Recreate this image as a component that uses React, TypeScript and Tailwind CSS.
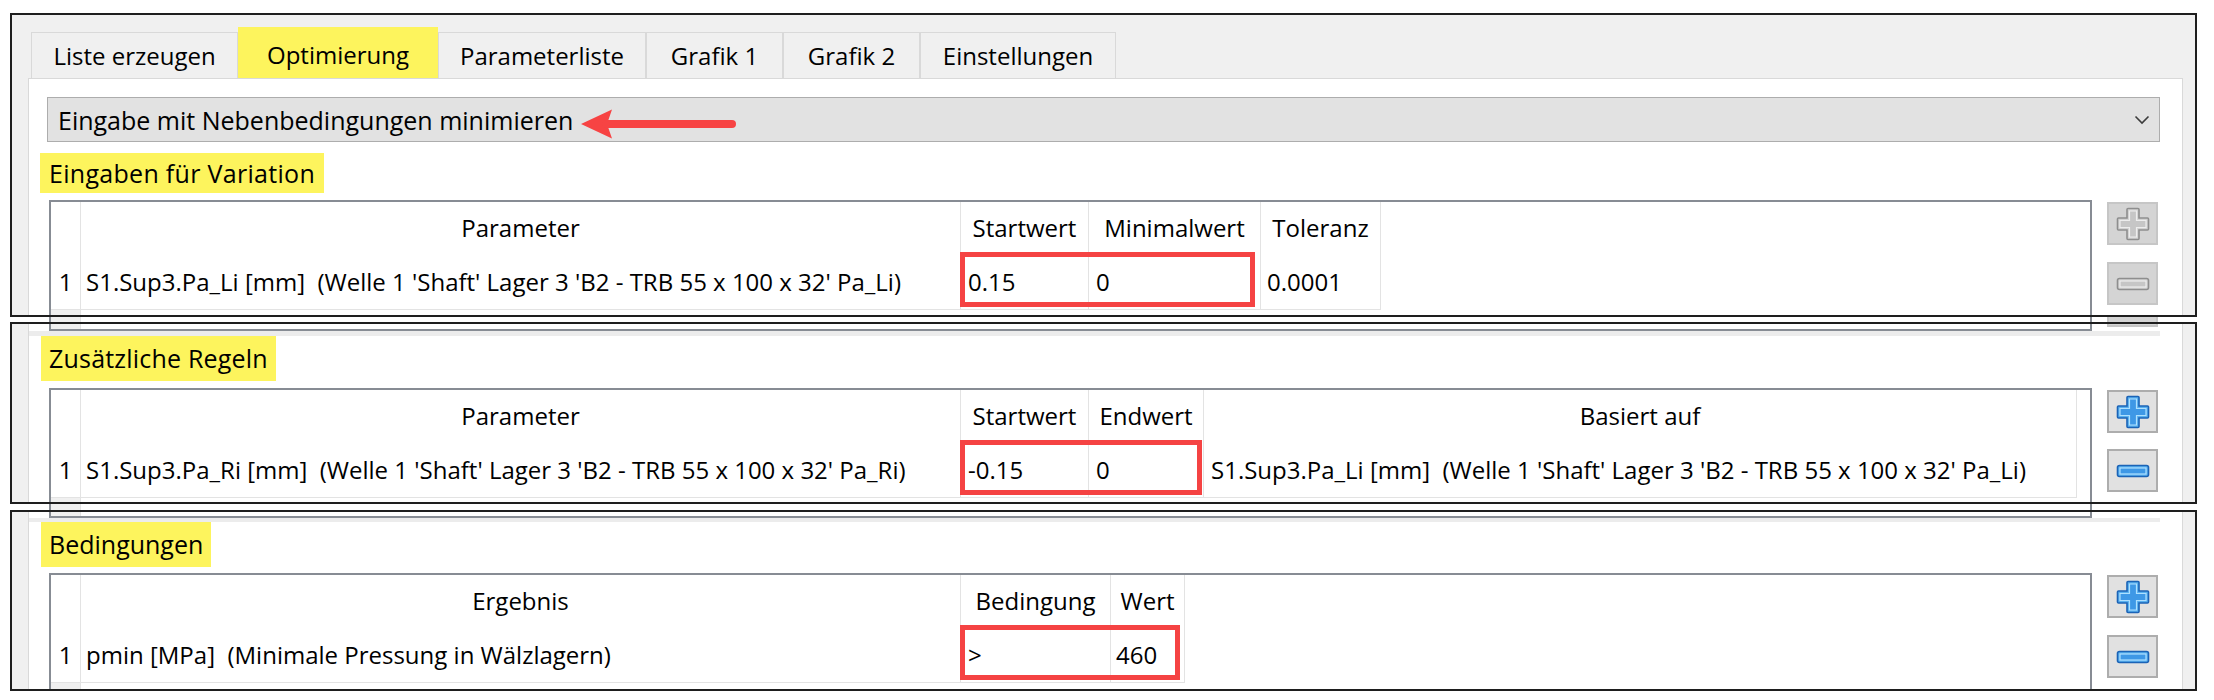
import React from "react";

const YEL = "bg-[#fdf45d]";

function Chevron() {
  return (
    <svg width="16" height="10" viewBox="0 0 16 10">
      <polyline points="1.5,1.5 8,8 14.5,1.5" fill="none" stroke="#3c3c3c" strokeWidth="1.6" />
    </svg>
  );
}

function Arrow() {
  return (
    <svg width="156" height="32" viewBox="0 0 156 32" className="ml-[8px] mt-[6px] shrink-0">
      <path d="M0 16 L31 1.5 L26 16 L31 30.5 Z" fill="#f74343" />
      <line x1="25" y1="16" x2="151" y2="16" stroke="#f74343" strokeWidth="8" strokeLinecap="round" />
    </svg>
  );
}

function PlusIcon({ disabled }: { disabled?: boolean }) {
  const outerFill = disabled ? "#d2d2d2" : "#58b0ef";
  const outerStroke = disabled ? "#8e8e8e" : "#1b63b6";
  const innerFill = disabled ? "#c6c6c6" : "#3e98e6";
  const innerStroke = disabled ? "#ededed" : "#aee0ff";
  return (
    <svg width="34" height="34" viewBox="0 0 34 34">
      <path
        d="M12 1.5 H22 Q23 1.5 23 2.5 V11 H31.5 Q32.5 11 32.5 12 V22 Q32.5 23 31.5 23 H23 V31.5 Q23 32.5 22 32.5 H12 Q11 32.5 11 31.5 V23 H2.5 Q1.5 23 1.5 22 V12 Q1.5 11 2.5 11 H11 V2.5 Q11 1.5 12 1.5 Z"
        fill={outerFill}
        stroke={outerStroke}
        strokeWidth="1.6"
      />
      <path
        d="M13.5 4 H20.5 V13.5 H30 V20.5 H20.5 V30 H13.5 V20.5 H4 V13.5 H13.5 Z"
        fill={innerFill}
        stroke={innerStroke}
        strokeWidth="1.2"
      />
    </svg>
  );
}

function MinusIcon({ disabled }: { disabled?: boolean }) {
  const outerFill = disabled ? "#d2d2d2" : "#58b0ef";
  const outerStroke = disabled ? "#8e8e8e" : "#1b63b6";
  const innerFill = disabled ? "#c6c6c6" : "#3e98e6";
  const innerStroke = disabled ? "#ededed" : "#aee0ff";
  return (
    <svg width="34" height="14" viewBox="0 0 34 14">
      <rect x="1.5" y="1.5" width="31" height="11" rx="2" fill={outerFill} stroke={outerStroke} strokeWidth="1.6" />
      <rect x="4" y="4" width="26" height="6" fill={innerFill} stroke={innerStroke} strokeWidth="1.2" />
    </svg>
  );
}

function Buttons({ disabled, gap }: { disabled?: boolean; gap: string }) {
  const btn = disabled
    ? "w-[51px] h-[43px] border-2 border-[#c6c6c6] bg-[#d4d4d4] flex items-center justify-center"
    : "w-[51px] h-[43px] border-2 border-[#adadad] bg-[#e1e1e1] flex items-center justify-center";
  return (
    <div className={`ml-[15px] pt-[2px] flex flex-col shrink-0 ${gap}`}>
      <div className={btn}>
        <PlusIcon disabled={disabled} />
      </div>
      <div className={btn}>
        <MinusIcon disabled={disabled} />
      </div>
    </div>
  );
}

type Col = { label: string; w: string; value: string; pad: string };

function DataTable({ cols, boxW }: { cols: Col[]; boxW: string }) {
  return (
    <div className="w-[2043px] border-2 border-[#878c94] bg-white shrink-0">
      <div className="flex h-[52px]">
        <div className="w-[30px] shrink-0 border-r border-[#e3e3e3]" />
        {cols.map((c) => (
          <div
            key={c.label}
            className={`${c.w} shrink-0 border-r border-[#e3e3e3] flex items-center justify-center whitespace-nowrap`}
          >
            {c.label}
          </div>
        ))}
      </div>
      <div className="flex h-[56px] relative">
        <div className="w-[30px] shrink-0 border-r border-b border-[#e3e3e3] flex items-center justify-center">
          1
        </div>
        {cols.map((c) => (
          <div
            key={c.label}
            className={`${c.w} shrink-0 border-r border-b border-[#e3e3e3] flex items-center whitespace-nowrap ${c.pad}`}
          >
            {c.value}
          </div>
        ))}
        <div className={`absolute top-[-2px] left-[909px] h-[55px] border-[5px] border-[#f54343] ${boxW}`} />
      </div>
      <div className="w-[30px] h-[100px] bg-[#f0f0f0] border-r border-[#e3e3e3]" />
    </div>
  );
}

const PARAM_LI = "S1.Sup3.Pa_Li [mm]\u00a0\u00a0(Welle 1 'Shaft' Lager 3 'B2 - TRB 55 x 100 x 32' Pa_Li)";
const PARAM_RI = "S1.Sup3.Pa_Ri [mm]\u00a0\u00a0(Welle 1 'Shaft' Lager 3 'B2 - TRB 55 x 100 x 32' Pa_Ri)";

const cols1: Col[] = [
  { label: "Parameter", w: "w-[880px]", value: PARAM_LI, pad: "pl-[5px]" },
  { label: "Startwert", w: "w-[128px]", value: "0.15", pad: "pl-[7px]" },
  { label: "Minimalwert", w: "w-[172px]", value: "0", pad: "pl-[7px]" },
  { label: "Toleranz", w: "w-[120px]", value: "0.0001", pad: "pl-[6px]" },
];

const cols2: Col[] = [
  { label: "Parameter", w: "w-[880px]", value: PARAM_RI, pad: "pl-[5px]" },
  { label: "Startwert", w: "w-[128px]", value: "-0.15", pad: "pl-[7px]" },
  { label: "Endwert", w: "w-[115px]", value: "0", pad: "pl-[7px]" },
  { label: "Basiert auf", w: "w-[873px]", value: PARAM_LI, pad: "pl-[7px]" },
];

const cols3: Col[] = [
  { label: "Ergebnis", w: "w-[880px]", value: "pmin [MPa]\u00a0\u00a0(Minimale Pressung in Wälzlagern)", pad: "pl-[5px]" },
  { label: "Bedingung", w: "w-[150px]", value: ">", pad: "pl-[7px]" },
  { label: "Wert", w: "w-[74px]", value: "460", pad: "pl-[5px]" },
];

const tabs = [
  { label: "Liste erzeugen", w: "w-[207px]" },
  { label: "Optimierung", w: "w-[200px]", active: true },
  { label: "Parameterliste", w: "w-[208px]" },
  { label: "Grafik 1", w: "w-[137px]" },
  { label: "Grafik 2", w: "w-[137px]" },
  { label: "Einstellungen", w: "w-[196px]" },
];

function Highlight({ children, cls }: { children: React.ReactNode; cls: string }) {
  return (
    <div className={`self-start flex items-center shrink-0 whitespace-nowrap text-[25px] ${YEL} ${cls}`}>{children}</div>
  );
}

function TableStub({ h, withButton }: { h: string; withButton?: boolean }) {
  return (
    <div className="flex ml-[20px] shrink-0">
      <div className={`w-[2043px] ${h} border-x-2 border-b-2 border-[#878c94] bg-white`}>
        <div className="w-[30px] h-full bg-[#f0f0f0] border-r border-[#e3e3e3]" />
      </div>
      {withButton && <div className="ml-[15px] w-[51px] h-[3px] bg-[#d4d4d4] border-x-2 border-b-2 border-[#c6c6c6]" />}
    </div>
  );
}

function Frame({ h, children }: { h: string; children: React.ReactNode }) {
  return (
    <div className={`w-[2187px] ${h} border-2 border-[#1e1e1e] bg-[#f0f0f0] overflow-hidden flex flex-col shrink-0`}>
      {children}
    </div>
  );
}

function Body({ top, children }: { top?: boolean; children: React.ReactNode }) {
  return (
    <div className="flex-1 flex min-h-0">
      <div className="w-[16px] shrink-0" />
      <div
        className={`w-[2155px] shrink-0 border-l border-r border-[#d9d9d9] bg-white flex flex-col ${
          top ? "border-t" : ""
        }`}
      >
        {children}
      </div>
      <div className="flex-1" />
    </div>
  );
}

function Gap({ h, withButton }: { h: string; withButton?: boolean }) {
  return (
    <div className={`flex ${h} bg-white shrink-0`}>
      <div className="ml-[39px] w-[2043px] h-full border-x-2 border-[#878c94] bg-white">
        <div className="w-[30px] h-full bg-[#f0f0f0] border-r border-[#e3e3e3]" />
      </div>
      {withButton && <div className="ml-[15px] w-[51px] h-full bg-[#d4d4d4] border-x-2 border-[#c6c6c6]" />}
    </div>
  );
}

export default function App() {
  return (
    <div className="w-[2214px] h-[700px] bg-white overflow-hidden font-['Open_Sans',sans-serif] text-[24px] leading-none text-black">
      <div className="pl-[10px] pt-[13px] flex flex-col">
        <Frame h="h-[304px]">
          <div className="h-[63px] shrink-0 flex items-end pl-[19px]">
            {tabs.map((t) =>
              t.active ? (
                <div key={t.label} className={`${t.w} h-[51px] ${YEL} flex items-center justify-center pt-[4px] shrink-0`}>
                  {t.label}
                </div>
              ) : (
                <div
                  key={t.label}
                  className={`${t.w} h-[46px] border border-b-0 border-[#d9d9d9] bg-[#f0f0f0] flex items-center justify-center shrink-0`}
                >
                  {t.label}
                </div>
              )
            )}
          </div>
          <Body top>
            <div className="ml-[18px] mt-[18px] w-[2113px] h-[45px] border border-[#adadad] bg-[#e2e2e2] flex items-center pl-[10px] pt-[2px] relative shrink-0">
              <span className="whitespace-nowrap text-[25px]">Eingabe mit Nebenbedingungen minimieren</span>
              <Arrow />
              <div className="absolute right-[9px] top-[17px]">
                <Chevron />
              </div>
            </div>
            <Highlight cls="ml-[11px] mt-[11px] h-[40px] px-[9px] tracking-[0.3px]">Eingaben für Variation</Highlight>
            <div className="flex ml-[20px] mt-[7px]">
              <DataTable cols={cols1} boxW="w-[295px]" />
              <Buttons disabled gap="gap-[17px]" />
            </div>
          </Body>
        </Frame>
        <Gap h="h-[5px]" withButton />
        <Frame h="h-[182px]">
          <Body>
            <TableStub h="h-[7px]" withButton />
            <div className="w-[2131px] h-[5px] bg-[#ececec] shrink-0" />
            <Highlight cls="ml-[12px] h-[45px] px-[8px] tracking-[0.2px]">Zusätzliche Regeln</Highlight>
            <div className="flex ml-[20px] mt-[7px]">
              <DataTable cols={cols2} boxW="w-[242px]" />
              <Buttons gap="gap-[16px]" />
            </div>
          </Body>
        </Frame>
        <Gap h="h-[6px]" />
        <Frame h="h-[181px]">
          <Body>
            <TableStub h="h-[6px]" />
            <div className="w-[2131px] h-[4px] bg-[#ececec] shrink-0" />
            <Highlight cls="ml-[12px] h-[45px] px-[8px] text-[24px]">Bedingungen</Highlight>
            <div className="flex ml-[20px] mt-[6px]">
              <DataTable cols={cols3} boxW="w-[220px]" />
              <Buttons gap="gap-[17px]" />
            </div>
          </Body>
        </Frame>
      </div>
    </div>
  );
}
